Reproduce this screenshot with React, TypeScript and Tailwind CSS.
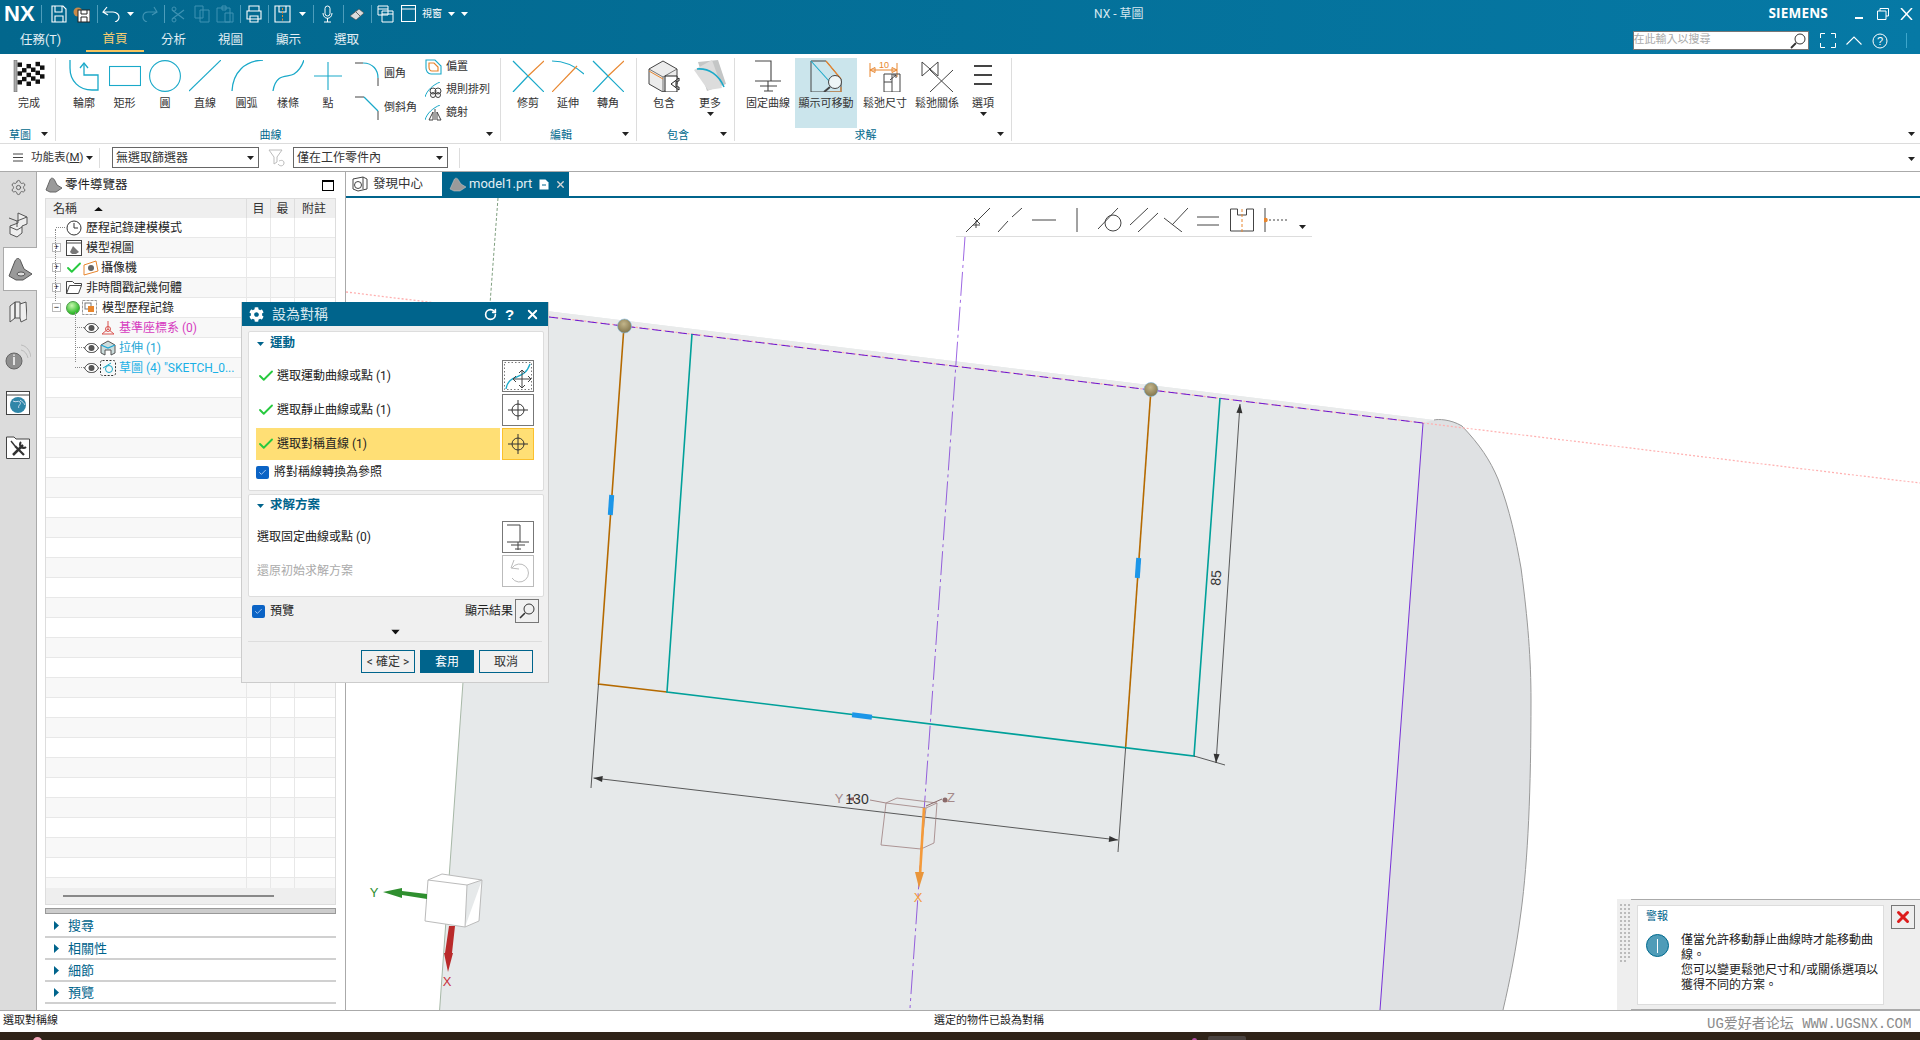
import type { ReactNode } from 'react';
import { Check, RotateCw, Settings, X } from 'lucide-react';
import { FaCog } from 'react-icons/fa';

const CY = '#1aa9c9';
const OR = '#e8862e';
const DK = '#444';

function Ico({ w, h, children, className }: { w: number; h: number; children: ReactNode; className?: string }) {
  return (
    <svg width={w} height={h} viewBox={`0 0 ${w} ${h}`} fill="none" className={`block shrink-0 ${className ?? ''}`}>
      {children}
    </svg>
  );
}

function Caret({ className, color = '#222' }: { className?: string; color?: string }) {
  return (
    <svg width="7" height="4" viewBox="0 0 7 4" className={`block shrink-0 ${className ?? ''}`}>
      <path d="M0 0h7L3.5 4z" fill={color} />
    </svg>
  );
}

function Sep({ ml }: { ml: string }) {
  return <div className={`w-px h-[18px] bg-[#4d9dbb] shrink-0 ${ml}`} />;
}

function Flag() {
  const cells = [];
  for (let r = 0; r < 5; r++) {
    for (let c = 0; c < 6; c++) {
      const wave = Math.sin(c * 0.9) * 1.5;
      if ((r + c) % 2 === 0) cells.push(<rect key={`${r}-${c}`} x={4.5 + c * 4.5} y={2.5 + r * 4.4 + wave} width="4.5" height="4.4" fill="#111" />);
    }
  }
  return (
    <Ico w={32} h={32}>
      <rect x="1" y="0" width="3" height="32" fill="#aaa" stroke="#555" strokeWidth="0.5" />
      {cells}
    </Ico>
  );
}

const curveIcons: { label: string; w: string; icon: ReactNode }[] = [
  {
    label: '輪廓', w: 'w-[40px]', icon: (
      <Ico w={30} h={32}>
        <path d="M1 0v8c0 13 9 22 22 22h6V15H15V4" stroke={CY} strokeWidth="1.3" />
        <path d="M11 8l4-5 4 5" stroke={CY} strokeWidth="1.3" />
      </Ico>
    ),
  },
  { label: '矩形', w: 'w-[41px]', icon: <Ico w={32} h={32}><rect x="0.5" y="6.5" width="31" height="19" stroke={CY} strokeWidth="1.1" /></Ico> },
  { label: '圓', w: 'w-[40px]', icon: <Ico w={32} h={32}><circle cx="16" cy="16" r="15.4" stroke={CY} strokeWidth="1.1" /></Ico> },
  { label: '直線', w: 'w-[40px]', icon: <Ico w={32} h={32}><path d="M0 31L32 0" stroke={CY} strokeWidth="1.2" /></Ico> },
  { label: '圓弧', w: 'w-[43px]', icon: <Ico w={32} h={32}><path d="M1 31C2 12 14 1 32 0" stroke={CY} strokeWidth="1.3" /></Ico> },
  { label: '樣條', w: 'w-[40px]', icon: <Ico w={32} h={32}><path d="M1 31C4 12 16 18 22 14S30 6 32 0" stroke={CY} strokeWidth="1.3" /></Ico> },
  { label: '點', w: 'w-[40px]', icon: <Ico w={28} h={32}><path d="M14 2v28M0 16h28" stroke={CY} strokeWidth="1.1" /></Ico> },
];

function Tool({ label, w, icon, caret, active }: { label: string; w: string; icon: ReactNode; caret?: boolean; active?: boolean }) {
  return (
    <div className={`${w} h-[70px] flex flex-col items-center shrink-0 ${active ? 'bg-[#cbe5ec]' : ''}`}>
      <div className="h-[32px] mt-[2px] flex items-start justify-center">{icon}</div>
      <div className="mt-[6px] text-[11px] leading-[12px] text-[#333] whitespace-nowrap">{label}</div>
      {caret && <Caret className="mt-[2px]" />}
    </div>
  );
}

function Group({ w, label, children }: { w: string; label: string; children: ReactNode }) {
  return (
    <div className={`${w} h-[83px] mt-[4px] flex flex-col border-r border-[#ddd] shrink-0`}>
      <div className="h-[72px] flex">{children}</div>
      <div className="relative h-[11px] flex justify-center pr-[15px] text-[11px] leading-[12px] text-[#00698d]">
        {label}
        <Caret className="absolute right-[7px] top-[2px]" />
      </div>
    </div>
  );
}

function SmallRow({ icon, label, h, lw }: { icon: ReactNode; label: string; h: string; lw?: string }) {
  return (
    <div className={`flex items-center gap-[4px] ${h}`}>
      {icon}
      <span className={`text-[11px] text-[#333] whitespace-nowrap ${lw ?? ''}`}>{label}</span>
    </div>
  );
}

function Ribbon() {
  return (
    <div className="h-[90px] flex bg-white border-b border-[#dcdcdc] relative shrink-0">
      <Group w="w-[56px]" label="草圖">
        <div className="pl-[9px]"><Tool label="完成" w="w-[40px]" icon={<Flag />} /></div>
      </Group>
      <Group w="w-[445px]" label="曲線">
        <div className="flex pl-[8px]">
          {curveIcons.map((t) => <Tool key={t.label} {...t} />)}
          <div className="ml-[7px] w-[70px] pt-[4px] flex flex-col gap-[10px]">
            <SmallRow h="h-[24px]" label="圓角" icon={
              <Ico w={25} h={24}><path d="M0 1h8M23 16v8" stroke={DK} strokeWidth="1" /><path d="M8 1c10 0 15 7 15 15" stroke={CY} strokeWidth="1.2" /></Ico>
            } />
            <SmallRow h="h-[24px]" label="倒斜角" icon={
              <Ico w={25} h={24}><path d="M0 1h9M23 15v9" stroke={DK} strokeWidth="1" /><path d="M9 1l14 14" stroke={CY} strokeWidth="1.2" /></Ico>
            } />
          </div>
          <div className="w-[72px] pt-[1px] flex flex-col gap-[7px]">
            <SmallRow h="h-[16px]" label="偏置" icon={
              <Ico w={17} h={16}><path d="M1 1h9l6 6v8H6C3 15 1 12 1 9z" stroke={CY} strokeWidth="1.1" /><path d="M4 4h5l4 4v4H7C5 12 4 10 4 8z" stroke={OR} strokeWidth="1.2" /></Ico>
            } />
            <SmallRow h="h-[16px]" label="規則排列" icon={
              <Ico w={17} h={16}><path d="M0 15C2 8 8 3 15 0" stroke={CY} /><circle cx="8" cy="9" r="3" stroke={DK} /><circle cx="13" cy="9" r="3" stroke={DK} /><circle cx="8" cy="13" r="2.5" stroke={DK} /><circle cx="13" cy="13" r="2.5" stroke={DK} /></Ico>
            } />
            <SmallRow h="h-[16px]" label="鏡射" icon={
              <Ico w={17} h={16}><path d="M0 15C2 8 8 3 15 0" stroke={CY} /><path d="M10 4v11M8 7l-4 8h4zM12 7l4 8h-4z" stroke={DK} /></Ico>
            } />
          </div>
        </div>
      </Group>
      <Group w="w-[136px]" label="編輯">
        <div className="flex pl-[7px]">
          <Tool label="修剪" w="w-[40px]" icon={<Ico w={32} h={32}><path d="M1 1l31 31" stroke={CY} strokeWidth="1.2" /><path d="M16 16L32 1" stroke={OR} strokeWidth="1.2" /><path d="M1 32l15-16" stroke={CY} strokeWidth="1.2" /></Ico>} />
          <Tool label="延伸" w="w-[40px]" icon={<Ico w={32} h={32}><path d="M0 1c12 0 23 5 32 13" stroke={CY} strokeWidth="1.2" /><path d="M0 32L25 6" stroke={OR} strokeWidth="1.2" /></Ico>} />
          <Tool label="轉角" w="w-[40px]" icon={<Ico w={32} h={32}><path d="M1 32L16 16L32 32" stroke={CY} strokeWidth="1.2" /><path d="M1 1l15 15" stroke={CY} strokeWidth="1.2" /><path d="M16 16L32 1" stroke={OR} strokeWidth="1.2" /></Ico>} />
        </div>
      </Group>
      <Group w="w-[98px]" label="包含">
        <div className="flex pl-[7px] gap-[6px]">
          <Tool label="包含" w="w-[40px]" icon={
            <Ico w={32} h={32}>
              <path d="M15 1l14 8v15l-14 8-14-8V9z" fill="#ececec" stroke={DK} />
              <path d="M1 9l14 8 14-8M15 17v15" stroke={DK} strokeWidth="0.7" />
              <path d="M1 11l14 8" stroke={OR} />
              <path d="M17 16h12v16H17z" fill="#fff" stroke="#222" />
              <path d="M31 18l-8 6 8 6v-3h-3v-6h3z" fill="#fff" stroke="#222" />
            </Ico>
          } />
          <Tool label="更多" w="w-[40px]" caret icon={
            <Ico w={32} h={32}>
              <path d="M4 2l20-2 8 24-19 7z" fill="#c4c6c6" />
              <path d="M0 10L18 0l10 28-14 2z" fill="#dcdcdc" />
              <path d="M3 9c12-1 22 6 27 18" stroke={CY} strokeWidth="1.6" />
            </Ico>
          } />
        </div>
      </Group>
      <Group w="w-[277px]" label="求解">
        <div className="flex pl-[9px]">
          <Tool label="固定曲線" w="w-[48px]" icon={<Ico w={26} h={32}><path d="M0 1h16v20M0 21h26M5 26h17M9 31h9M13 21v10" stroke={DK} strokeWidth="1.1" /></Ico>} />
          <div className="w-[3px]" />
          <Tool label="顯示可移動" w="w-[62px]" active icon={
            <Ico w={32} h={32}>
              <path d="M1 1h15l15 18v13H1z" stroke={DK} strokeWidth="1" />
              <path d="M16 1l15 18" stroke={OR} strokeWidth="1.2" />
              <path d="M1 1l18 20" stroke={CY} strokeWidth="1.1" />
              <path d="M20 32h11v-5" stroke={OR} />
              <circle cx="25" cy="22" r="6.5" fill="#eef6f7" stroke={DK} />
              <path d="M20 27l-6 5" stroke={DK} strokeWidth="2" />
            </Ico>
          } />
          <Tool label="鬆弛尺寸" w="w-[56px]" icon={
            <Ico w={32} h={32}>
              <path d="M1 3v14M28 3v14M1 10h27M1 10l5-2.5v5zM28 10l-5-2.5v5z" stroke={OR} />
              <text x="10" y="8" fontSize="9" fill={OR} fontFamily="Liberation Sans">10</text>
              <path d="M15 14h16v18H15zM15 22h8M23 14v18M21 20l6-5M24 15h3v3" stroke={DK} />
            </Ico>
          } />
          <Tool label="鬆弛關係" w="w-[48px]" icon={<Ico w={32} h={32}><path d="M1 2l16 14M1 16l16-14M1 2v14M17 2v14M9 32l23-22M9 10l23 22" stroke={DK} strokeWidth="1" /></Ico>} />
          <Tool label="選項" w="w-[44px]" caret icon={<Ico w={18} h={32}><path d="M0 6h18M0 15h18M0 24h18" stroke={DK} strokeWidth="2.2" /></Ico>} />
        </div>
      </Group>
      <Caret className="absolute right-[5px] top-[78px]" />
    </div>
  );
}

function TitleBar() {
  return (
    <div className="h-[54px] bg-gradient-to-r from-[#02678d] to-[#0679a5] text-white shrink-0">
      <div className="h-[27px] flex items-center pl-[4px] pr-[7px]">
        <div className="w-[32px] text-[22px] font-bold leading-none font-['Liberation_Sans',sans-serif]">NX</div>
        <Sep ml="ml-[5px]" />
        <Ico w={16} h={18} className="ml-[9px]"><path d="M1 1h11l3 3v13H1zM4 1v6h7V1M4 17v-6h8v6" stroke="#fff" strokeWidth="1.1" /></Ico>
        <Ico w={17} h={18} className="ml-[6px]"><circle cx="5" cy="7" r="4.5" fill="#c98a4a" /><rect x="5" y="5" width="12" height="12" fill="#fff" stroke="#222" /><path d="M8 5v4h6V5M8 17v-5h6v5" stroke="#222" /></Ico>
        <Sep ml="ml-[7px]" />
        <Ico w={18} h={16} className="ml-[4px]"><path d="M5 1L1 6l5 3M1 6h10c4 0 6 3 6 5s-1 4-4 5" stroke="#fff" strokeWidth="1.2" /></Ico>
        <Caret className="ml-[7px]" color="#fff" />
        <Ico w={16} h={16} className="ml-[8px]"><path d="M12 1l3 5-5 3M15 6H6c-4 0-5 3-5 5s1 4 4 5" stroke="#3f93b3" strokeWidth="1.2" /></Ico>
        <Sep ml="ml-[6px]" />
        <Ico w={16} h={18} className="ml-[6px]"><path d="M1 14l12-9M1 5l12 9" stroke="#3f93b3" strokeWidth="1.2" /><circle cx="3" cy="15" r="2" stroke="#3f93b3" /><circle cx="3" cy="4" r="2" stroke="#3f93b3" /></Ico>
        <Ico w={16} h={18} className="ml-[7px]"><path d="M1 1h8v12H1zM6 5h9v12H6z" stroke="#3f93b3" /></Ico>
        <Ico w={18} h={18} className="ml-[6px]"><path d="M1 3h13v14H1zM6 1h4v4H6zM9 8h8v9H9z" stroke="#3f93b3" /></Ico>
        <Sep ml="ml-[6px]" />
        <Ico w={16} h={18} className="ml-[5px]"><path d="M3 6V1h10v5M1 6h14v8H1zM4 11h8v6H4z" stroke="#fff" strokeWidth="1.1" /></Ico>
        <Sep ml="ml-[6px]" />
        <Ico w={17} h={18} className="ml-[5px]"><path d="M1 1h15v16H1zM5 1v6h7V1" stroke="#fff" strokeWidth="1.1" /><path d="M8.5 3v14" stroke={OR} strokeDasharray="2 1.5" /></Ico>
        <Caret className="ml-[8px]" color="#fff" />
        <Sep ml="ml-[7px]" />
        <Ico w={11} h={18} className="ml-[8px]"><rect x="3" y="1" width="5" height="10" rx="2.5" stroke="#fff" /><path d="M1 8c0 7 9 7 9 0M5.5 13v4M2 17h7" stroke="#fff" /></Ico>
        <Sep ml="ml-[10px]" />
        <Ico w={16} h={14} className="ml-[5px]"><path d="M1 9l9-7 5 4-8 7z" fill="#dcdcdc" stroke="#444" strokeWidth="0.6" /><path d="M6 4l5 5" stroke="#666" /></Ico>
        <Sep ml="ml-[6px]" />
        <Ico w={17} h={18} className="ml-[5px]"><path d="M1 1h10v9H1zM5 6h11v11H5zM5 9h11M1 4h10" stroke="#fff" /></Ico>
        <Ico w={15} h={17} className="ml-[7px]"><path d="M.5.5h14v16H.5zM.5 4h14" stroke="#fff" strokeWidth="1.1" /></Ico>
        <span className="ml-[6px] w-[20px] text-[10px] whitespace-nowrap">視窗</span>
        <Caret className="ml-[6px]" color="#fff" />
        <Caret className="ml-[6px]" color="#fff" />
        <div className="ml-[626px] w-[52px] text-[12px] text-[#d5e8ef] whitespace-nowrap">NX - 草圖</div>
        <div className="ml-auto text-[13.5px] font-bold tracking-[0.2px] font-['Open_Sans',sans-serif]">SIEMENS</div>
        <div className="ml-[27px] w-[8px] h-[2px] bg-white mt-[8px]" />
        <Ico w={12} h={12} className="ml-[14px]"><path d="M3 3V.5h8.5V8H9M.5 3H9v8.5H.5z" stroke="#fff" /></Ico>
        <Ico w={13} h={12} className="ml-[11px]"><path d="M1 0l11 12M12 0L1 12" stroke="#fff" strokeWidth="1.5" /></Ico>
      </div>
      <div className="h-[27px] flex items-center pl-[20px] pr-[13px] text-[12.5px]">
        <span className="w-[40px] whitespace-nowrap text-[#e3eff4]">任務(T)</span>
        <div className="ml-[26px] w-[58px] h-[25px] self-start pt-[3px] text-center border-b-2 border-[#f4c35e] text-[#f6cd72]">首頁</div>
        <span className="ml-[17px] text-[#e3eff4]">分析</span>
        <span className="ml-[32px] text-[#e3eff4]">視圖</span>
        <span className="ml-[33px] text-[#e3eff4]">顯示</span>
        <span className="ml-[33px] text-[#e3eff4]">選取</span>
        <div className="ml-auto w-[176px] h-[19px] bg-white border border-[#777] flex items-center justify-between pr-[2px]">
          <span className="text-[11px] text-[#aaa] whitespace-nowrap">在此輸入以搜尋</span>
          <Ico w={16} h={16}><circle cx="10" cy="6" r="5" stroke="#333" /><path d="M6 10l-5 5" stroke="#333" strokeWidth="1.8" /></Ico>
        </div>
        <Ico w={16} h={15} className="ml-[11px]"><path d="M5 .5H.5V5M11 .5h4.5V5M5 14.5H.5V10M11 14.5h4.5V10" stroke="#fff" /></Ico>
        <Ico w={16} h={9} className="ml-[10px]"><path d="M.5 8.5L8 1l7.5 7.5" stroke="#fff" strokeWidth="1.1" /></Ico>
        <Ico w={16} h={16} className="ml-[10px]"><circle cx="8" cy="8" r="7" stroke="#fff" /><text x="5" y="12" fontSize="11" fill="#fff" fontFamily="Liberation Sans">?</text></Ico>
        <div className="ml-[18px] w-[1.5px] h-[15px] bg-[#3ea6cc]" />
      </div>
    </div>
  );
}

function SelectBar() {
  return (
    <div className="h-[28px] flex items-center bg-white border-b border-[#aaa] relative shrink-0 text-[12px] text-[#333]">
      <Ico w={10} h={9} className="ml-[13px]"><path d="M0 1h10M0 4.5h10M0 8h10" stroke="#444" /></Ico>
      <span className="ml-[8px] w-[50px] whitespace-nowrap text-[11.5px]">功能表(<span className="underline">M</span>)</span>
      <Caret className="ml-[5px]" />
      <div className="ml-[6px] w-px h-[20px] bg-[#ddd]" />
      <div className="ml-[12px] w-[147px] h-[21px] border border-[#666] flex items-center justify-between pl-[3px] pr-[4px]">
        <span>無選取篩選器</span><Caret />
      </div>
      <Ico w={18} h={18} className="ml-[9px]"><path d="M1 1h13L9 8v5l-3 2V8z" stroke="#bbb" /><path d="M10 15c2 3 6 2 6-1s-3-3-5-2" stroke="#bbb" /></Ico>
      <div className="ml-[7px] w-[155px] h-[21px] border border-[#666] flex items-center justify-between pl-[3px] pr-[4px]">
        <span>僅在工作零件內</span><Caret />
      </div>
      <div className="ml-[11px] w-px h-[20px] bg-[#ddd]" />
      <Caret className="absolute right-[5px] top-[13px]" />
    </div>
  );
}

function SideStrip() {
  const base = 'w-full flex items-center justify-center';
  return (
    <div className="w-[37px] bg-[#dcdcdc] border-r border-[#aaa] flex flex-col shrink-0 items-end">
      <div className={`${base} h-[30px]`}><Settings size={17} color="#555" strokeWidth={1.2} /></div>
      <div className={`${base} h-[45px]`}>
        <Ico w={20} h={26}><path d="M10 1l9 4v7l-5 2v7l-5 4-7-3v-8l8-3z" fill="#eee" stroke="#555" /><path d="M1 6l8 3 10-4M9 9v6M2 15l7 3 5-3" stroke="#555" /></Ico>
      </div>
      <div className="w-[34px] h-[44px] -mr-px bg-white border-y border-l border-[#aaa] flex items-center justify-center">
        <Ico w={25} h={24}>
          <path d="M1 19L7 4c2-4 5-3 6 1l3 7 8 5-9 6H8z" fill="#9a9a9a" stroke="#555" />
          <ellipse cx="13" cy="17" rx="4" ry="2" fill="#ddd" stroke="#555" />
        </Ico>
      </div>
      <div className={`${base} h-[42px]`}><Ico w={18} h={22}><path d="M1 5l5-4v16l-5 4zM6 1h5v16H6zM11 3l6-2 1 17-6 3-1-4" stroke="#555" fill="#eee" /></Ico></div>
      <div className={`${base} h-[48px]`}>
        <Ico w={26} h={26}><circle cx="9" cy="17" r="8" fill="#8f8f8f" stroke="#666" /><path d="M9 13v8M9 10.5v1.2" stroke="#fff" strokeWidth="1.5" /><path d="M16 6c4 1 6 4 7 8M16 1c6 1 9 6 10 12" stroke="#bbb" /></Ico>
      </div>
      <div className={`${base} h-[43px]`}>
        <Ico w={24} h={24}><rect x=".5" y=".5" width="23" height="23" fill="#fff" stroke="#444" /><path d="M1 4h22" stroke="#444" /><circle cx="12" cy="14" r="8" fill="#2f86a8" /><path d="M7 10c3 2 5-1 7 1s-3 4-1 6M14 9c3 2 4 3 5 5" stroke="#cde" /></Ico>
      </div>
      <div className={`${base} h-[44px]`}>
        <Ico w={24} h={25}>
          <path d="M.5 24.5V3H8l2 2h13.5v19.5z" fill="#fff" stroke="#444" />
          <path d="M7 21L17 11" stroke="#333" strokeWidth="2.5" />
          <path d="M15 8a3.5 3.5 0 1 0 5 5" stroke="#333" strokeWidth="2" />
          <path d="M18 21L9 12" stroke="#333" strokeWidth="2.2" />
          <path d="M5 7l4 5" stroke="#333" strokeWidth="1.4" />
        </Ico>
      </div>
    </div>
  );
}

type Row = { indent?: boolean; toggle?: string; check?: boolean; icon?: ReactNode; text: string; color?: string; x: string };

const rows: Row[] = [
  { text: '歷程記錄建模模式', x: 'ml-[4px]', icon: <Ico w={16} h={16}><circle cx="8" cy="8" r="7" stroke="#333" /><path d="M8 3v5h4" stroke="#333" /></Ico> },
  { toggle: '+', text: '模型視圖', x: 'ml-[4px]', icon: <Ico w={16} h={16}><rect x=".5" y=".5" width="15" height="15" fill="#fff" stroke="#444" /><path d="M1 3h14" stroke="#444" /><path d="M4 12l3-6 3 3 3 3-3 2H6z" fill="#777" /></Ico> },
  { toggle: '+', check: true, text: '攝像機', x: 'ml-[2px]', icon: <Ico w={16} h={16}><path d="M1 5l12-4 2 10-14 4z" stroke={OR} /><circle cx="8" cy="8" r="3" fill="#666" /></Ico> },
  { toggle: '+', text: '非時間戳記幾何體', x: 'ml-[4px]', icon: <Ico w={16} h={13}><path d="M.5 12.5V.5h6l2 2h7v2M.5 12.5l3-8h12l-3 8z" stroke="#444" fill="#fff" /></Ico> },
  { toggle: '−', text: '模型歷程記錄', x: 'ml-[5px]', icon: (
    <span className="flex items-center gap-[2px]">
      <span className="w-[14px] h-[14px] rounded-full bg-[radial-gradient(circle_at_40%_30%,#c8f7b0,#2fbb2a_70%)] border border-[#4a9c46]" />
      <Ico w={15} h={15}><rect x=".5" y=".5" width="14" height="14" stroke="#999" strokeDasharray="3 1" /><rect x="3" y="3" width="6" height="6" stroke="#777" /><rect x="6" y="6" width="6" height="6" fill={OR} /></Ico>
    </span>
  ) },
  { indent: true, text: '基準座標系 (0)', color: 'text-[#d63cc0]', x: 'ml-[3px]', icon: <Ico w={16} h={16}><path d="M8 1v8M8 9L2 14M8 9l6 5M2 14h12" stroke="#d9534f" /><circle cx="8" cy="9" r="2.5" stroke="#d9534f" /></Ico> },
  { indent: true, text: '拉伸 (1)', color: 'text-[#1ea7d6]', x: 'ml-[3px]', icon: <Ico w={16} h={16}><path d="M8 1l7 4v8l-4 2v-5H5v5l-4-2V5z" fill="#cdd" stroke="#555" /><path d="M1 5l7 3 7-3" stroke="#1ea7d6" strokeWidth="1.3" /></Ico> },
  { indent: true, text: '草圖 (4) "SKETCH_0...', color: 'text-[#19b0e6]', x: 'ml-[3px]', icon: <Ico w={16} h={16}><rect x=".5" y=".5" width="15" height="15" rx="2" stroke="#333" strokeDasharray="2 1.5" /><circle cx="9" cy="9" r="3.5" stroke={CY} /><path d="M3 8l8-5" stroke={CY} /></Ico> },
];

function Eye() {
  return <Ico w={15} h={10}><path d="M.5 5C3 1 5 .5 7.5.5S12 1 14.5 5C12 9 10 9.5 7.5 9.5S3 9 .5 5z" stroke="#333" fill="#fff" /><circle cx="7.5" cy="5" r="3" fill="#555" /></Ico>;
}

function Toggle({ sign }: { sign: string }) {
  return <div className="w-[9px] h-[9px] border border-[#bbb] bg-white flex items-center justify-center text-[9px] leading-[7px] text-black font-['Liberation_Sans']">{sign}</div>;
}

function TreeRow({ row, i }: { row?: Row; i: number }) {
  return (
    <div className={`h-[20px] grid grid-cols-[200px_24px_24px_1fr] border-b border-[#e8e8e8] ${i % 2 ? 'bg-[#f8f8f8]' : 'bg-white'}`}>
      <div className="flex items-center text-[12px] whitespace-nowrap overflow-hidden text-[#222]">
        {row && (row.indent ? (
          <div className="ml-[29px] flex items-center">
            <div className="w-[9px] border-t border-dotted border-[#888]" />
            <Eye />
            <div className="ml-[1px]">{row.icon}</div>
          </div>
        ) : (
          <div className="ml-[6px] flex items-center">
            <div className="w-[9px] mr-[5px]">{row.toggle ? <Toggle sign={row.toggle} /> : <div className="ml-[4px] w-[9px] border-t border-dotted border-[#888]" />}</div>
            {row.check && <Check size={18} color="#27c93f" strokeWidth={2.5} className="-ml-[1px]" />}
            {row.icon}
          </div>
        ))}
        {row && <span className={`${row.x} ${row.color ?? ''}`}>{row.text}</span>}
      </div>
      <div className="border-l border-[#e8e8e8]" />
      <div className="border-l border-[#e8e8e8]" />
      <div className="border-l border-[#e8e8e8]" />
    </div>
  );
}

function Navigator() {
  return (
    <div className="w-[309px] bg-white border-r border-[#aaa] flex flex-col shrink-0 pl-[8px] pr-[9px]">
      <div className="h-[26px] flex items-center">
        <Ico w={17} h={16}><path d="M1 13L5 3c1-3 4-2 5 1l2 4 5 3-6 4H5z" fill="#9a9a9a" stroke="#666" /></Ico>
        <span className="ml-[3px] text-[12.5px] text-[#222]">零件導覽器</span>
        <div className="ml-auto mr-[2px] w-[12px] h-[11px] border border-black border-t-2" />
      </div>
      <div className="w-[291px] h-[707px] border border-[#ddd] flex flex-col overflow-hidden">
        <div className="h-[19px] grid grid-cols-[200px_24px_24px_1fr] bg-[#efefef] text-[12px] text-[#333] shrink-0">
          <div className="flex items-center pl-[7px]">名稱<Caret className="ml-[18px] scale-x-125 rotate-180" color="#111" /></div>
          <div className="border-l border-[#ddd] flex items-center justify-center">目</div>
          <div className="border-l border-[#ddd] flex items-center justify-center">最</div>
          <div className="border-l border-[#ddd] pl-[7px] flex items-center">附註</div>
        </div>
        <div className="flex-1 overflow-hidden relative">
          {Array.from({ length: 34 }, (_, i) => <TreeRow key={i} row={rows[i]} i={i} />)}
          <div className="absolute left-[9px] top-[11px] h-[72px] border-l border-dotted border-[#888]" />
          <div className="absolute left-[29px] top-[94px] h-[50px] border-l border-dotted border-[#888]" />
        </div>
        <div className="h-[16px] bg-[#eee] shrink-0 pt-[7px] pl-[17px]"><div className="w-[211px] h-[2px] bg-[#888]" /></div>
      </div>
      <div className="mt-[3px] h-[6px] w-[291px] bg-[#ccc] border border-[#999]" />
      {['搜尋', '相關性', '細節', '預覽'].map((t, i) => (
        <div key={t} className={`w-[291px] border-b-2 border-[#d0d0d0] flex items-center pl-[9px] pt-[1px] text-[13px] text-[#00648c] ${i === 0 ? 'h-[24px]' : 'h-[22px]'}`}>
          <svg width="5" height="9" viewBox="0 0 5 9" className="block"><path d="M0 0l5 4.5L0 9z" fill="#00648c" /></svg>
          <span className="ml-[9px]">{t}</span>
        </div>
      ))}
    </div>
  );
}

function Arrow({ x, y, angle, color = '#333', len = 9, wid = 3 }: { x: number; y: number; angle: number; color?: string; len?: number; wid?: number }) {
  return <path d={`M0 0L${-len} ${-wid}V${wid}Z`} fill={color} transform={`translate(${x} ${y}) rotate(${angle})`} />;
}

function Canvas() {
  const purple = '#5a00d0';
  return (
    <svg viewBox="346 198 1574 812" className="absolute inset-0 w-full h-full">
      <path d="M490 304L1434 420L1423 423L1380 1010H439.6Z" fill="#e6e9ea" />
      <path d="M490 304L1434 420L1423 423L549 317Z" fill="#e9ebeb" />
      <path d="M1423 423C1430 420 1438 419 1445 420C1453 421 1458 423 1462 426C1480 445 1490 460 1498 479C1510 510 1516 540 1521 568C1528 620 1531 660 1531 700C1531 790 1528 860 1521 912C1516 950 1510 980 1503 1010H1380Z" fill="#dfe1e3" />
      <path d="M1434 420C1438 419 1450 419 1462 426C1480 445 1490 460 1498 479C1510 510 1516 540 1521 568C1528 620 1531 660 1531 700C1531 790 1528 860 1521 912C1516 950 1510 980 1503 1010" fill="none" stroke="#999" strokeWidth="1" />
      <path d="M498 198L490 304" stroke="#7f9f7f" strokeWidth="1" strokeDasharray="3 2" fill="none" />
      <path d="M490 304L439.6 1010" stroke="#a7b8a7" strokeWidth="1" fill="none" />
      <path d="M346 292L1423 423" stroke="#ffb0b0" strokeWidth="1.3" strokeDasharray="2 2" fill="none" />
      <path d="M1423 423L1920 483" stroke="#ffb0b0" strokeWidth="1.2" strokeDasharray="2 2" fill="none" />
      <path d="M549 317L1423 423" stroke={purple} strokeWidth="0.9" strokeDasharray="9 4" fill="none" />
      <path d="M1423 423L1380 1010" stroke={purple} strokeWidth="0.8" fill="none" />
      <path d="M965 237L910 1008" stroke={purple} strokeWidth="0.6" strokeDasharray="24 4 3 4" fill="none" />

      <path d="M624 326L598.5 684L667 692" stroke="#b56a00" strokeWidth="1.6" fill="none" />
      <path d="M1151 389L1125.6 748" stroke="#b56a00" strokeWidth="1.6" fill="none" />
      <path d="M692 334L667 692L1194 756L1220 398" stroke="#00a09a" strokeWidth="1.6" fill="none" />
      <rect x="608.5" y="495" width="5" height="20" fill="#1c96e8" transform="rotate(4 611 505)" />
      <rect x="1135.5" y="558" width="5" height="20" fill="#1c96e8" transform="rotate(4 1138 568)" />
      <rect x="852" y="713.5" width="20" height="5" fill="#1c96e8" transform="rotate(7 862 716)" />

      <path d="M598.5 684L591 788M1125.6 748L1118 852M593.5 778L1118 840" stroke="#333" strokeWidth="0.8" fill="none" />
      <Arrow x={593.5} y={778} angle={187} />
      <Arrow x={1118} y={840} angle={7} />
      <path d="M1240 404L1216 763M1194 756L1225 765" stroke="#333" strokeWidth="0.8" fill="none" />
      <Arrow x={1240} y={404} angle={-86} />
      <Arrow x={1216} y={763} angle={94} />
      <text x="1217" y="578" transform="rotate(-86 1217 578)" textAnchor="middle" fontSize="14" fill="#333" fontFamily="Liberation Sans" dominantBaseline="middle">85</text>

      <path d="M886 803L897 798L937 803L926 808ZM886 803L881 845L921 849L926 808M921 849L934 843L937 803" stroke="#a58a8a" strokeWidth="0.9" fill="none" />
      <path d="M870 800L886 803" stroke="#a58a8a" strokeWidth="1" />
      <path d="M926 806L942 799" stroke="#8a6a6a" strokeWidth="1" />
      <circle cx="945" cy="800" r="2.5" fill="#8a6a6a" />
      <path d="M846 799l8-2v4z" fill="#8a5a5a" />
      <text x="839" y="803" textAnchor="middle" fontSize="13" fill="#a58a8a" fontFamily="Liberation Sans">Y</text>
      <text x="951" y="802" textAnchor="middle" fontSize="13" fill="#a58a8a" fontFamily="Liberation Sans">Z</text>
      <text x="857" y="804" textAnchor="middle" fontSize="14" fill="#333" fontFamily="Liberation Sans">130</text>
      <path d="M924 808L920 875" stroke="#f49a3a" strokeWidth="2.6" />
      <path d="M919 888L915 872H924Z" fill="#e9953a" />
      <text x="918" y="902" textAnchor="middle" fontSize="13" fill="#f49a3a" fontFamily="Liberation Sans">X</text>

      <path d="M428 880L442 874L482 880L467 885ZM428 880L425 921L465 927L467 885M465 927L479 921L482 880" fill="#fff" stroke="#bbb" />
      <path d="M427 894L402 891V888L383 892L402 898V895L427 899Z" fill="#2f8f2f" />
      <path d="M449 926L445 953H444L448 972L453 953H452L455 926Z" fill="#b92a2a" />
      <text x="374" y="897" textAnchor="middle" fontSize="13" fill="#2f8f2f" fontFamily="Liberation Sans">Y</text>
      <text x="447" y="986" textAnchor="middle" fontSize="13" fill="#c9303a" fontFamily="Liberation Sans">X</text>

      <defs>
        <radialGradient id="ball" cx="45%" cy="35%" r="70%">
          <stop offset="0" stopColor="#c2b58a" />
          <stop offset="1" stopColor="#7d7048" />
        </radialGradient>
      </defs>
      <ellipse cx="624.5" cy="326" rx="7" ry="7" fill="url(#ball)" stroke="#7fbce6" strokeWidth="0.6" />
      <ellipse cx="1151" cy="389.5" rx="7" ry="7" fill="url(#ball)" stroke="#7fbce6" strokeWidth="0.6" />
    </svg>
  );
}

function FloatBar() {
  const c = '#444';
  return (
    <div className="absolute left-[610px] top-[9px] w-[356px] h-[30px] border-b border-[#ddd] bg-white pl-[10px] flex items-start pt-[1px]">
      <Ico w={24} h={24}><path d="M0 24L24 0M8 10l6 6M7 17h7M10 13v7" stroke={c} /></Ico>
      <Ico w={24} h={24} className="ml-[8px]"><path d="M0 24L10 13M14 9L24 0" stroke={c} /></Ico>
      <Ico w={24} h={24} className="ml-[10px]"><path d="M0 12h24" stroke={c} /></Ico>
      <Ico w={2} h={24} className="ml-[20px]"><path d="M1 0v24" stroke={c} /></Ico>
      <Ico w={24} h={24} className="ml-[20px]"><path d="M0 21L20 0" stroke={c} /><circle cx="15" cy="15" r="8" stroke={c} /></Ico>
      <Ico w={28} h={24} className="ml-[8px]"><path d="M0 17L18 0M8 24L28 5" stroke={c} /></Ico>
      <Ico w={24} h={24} className="ml-[6px]"><path d="M0 10l18 14M8 17L24 0" stroke={c} /></Ico>
      <Ico w={22} h={24} className="ml-[9px]"><path d="M0 9h22M0 17h22" stroke={c} /></Ico>
      <Ico w={24} h={24} className="ml-[11px]"><path d="M.5 1h7v6h9V1h7v22H.5z" stroke={c} /><path d="M12 1v23" stroke={OR} strokeDasharray="3 2" /></Ico>
      <Ico w={24} h={24} className="ml-[10px]"><path d="M1 0v24" stroke={c} /><path d="M5 12h19" stroke={c} strokeDasharray="2 2" /><circle cx="1.5" cy="12" r="2.3" fill={OR} /></Ico>
      <Caret className="ml-[11px] mt-[17px]" />
    </div>
  );
}

function Cross() {
  return <Ico w={20} h={20}><circle cx="10" cy="10" r="6" stroke="#333" /><path d="M10 0v20M0 10h20" stroke="#333" /></Ico>;
}

function PickRow({ label, icon, check, hot, dim }: { label: string; icon: ReactNode; check?: boolean; hot?: boolean; dim?: boolean }) {
  return (
    <div className="flex h-[32px] mb-[2px]">
      <div className={`w-[244px] flex items-center pl-[1px] text-[12px] ${hot ? 'bg-[#ffdf75]' : ''} ${dim ? 'text-[#aaa]' : 'text-[#222]'}`}>
        {check && <Check size={18} color="#27c93f" strokeWidth={2.5} className="mr-[2px]" />}
        <span>{label}</span>
      </div>
      <div className={`ml-[2px] w-[32px] h-[32px] border flex items-center justify-center ${hot ? 'bg-[#ffdf75] border-[#fbc02d]' : dim ? 'border-[#bbb]' : 'border-[#777]'}`}>{icon}</div>
    </div>
  );
}

function SectionHead({ title }: { title: string }) {
  return (
    <div className="h-[23px] flex items-center pl-[8px]">
      <svg width="7" height="4" viewBox="0 0 7 4" className="block"><path d="M0 0h7L3.5 4z" fill="#00648c" /></svg>
      <span className="ml-[6px] text-[12.5px] font-bold text-[#00648c]">{title}</span>
    </div>
  );
}

function Box() {
  return <div className="w-[13px] h-[13px] rounded-[2px] bg-[#0b63c5] flex items-center justify-center"><Check size={9} color="#cfe3ff" strokeWidth={2} /></div>;
}

function Dialog() {
  return (
    <div className="absolute left-[241px] top-[302px] w-[308px] h-[381px] bg-[#f0f0f0] border-x border-b border-[#ccc] flex flex-col">
      <div className="h-[24px] bg-[#00648c] flex items-center text-white shrink-0">
        <FaCog size={15} className="ml-[7px]" />
        <span className="ml-[8px] text-[14px] text-[#d8e8ef]">設為對稱</span>
        <RotateCw size={13} strokeWidth={3} className="ml-auto" />
        <span className="ml-[8px] w-[10px] text-[15px] font-bold font-['Liberation_Sans'] leading-none">?</span>
        <X size={15} strokeWidth={3} className="ml-[10px] mr-[8px]" />
      </div>
      <div className="mx-[6px] mt-[5px] w-[296px] h-[160px] bg-white border border-[#ddd] rounded-[2px] pl-[7px] shrink-0">
        <div className="-ml-[7px]"><SectionHead title="運動" /></div>
        <div className="h-[5px]" />
        <PickRow check label="選取運動曲線或點 (1)" icon={
          <Ico w={28} h={28}><rect x=".5" y=".5" width="27" height="27" stroke="#777" strokeDasharray="1.5 2" /><path d="M2 27C5 10 20 20 26 2" stroke={CY} strokeWidth="1.3" /><path d="M18 8v18M9 17h18M15 11l3-3 3 3M15 23l3 3 3-3M12 14l-3 3 3 3M24 14l3 3-3 3" stroke="#444" /></Ico>
        } />
        <PickRow check label="選取靜止曲線或點 (1)" icon={<Cross />} />
        <PickRow check hot label="選取對稱直線 (1)" icon={<Cross />} />
        <div className="flex items-center mt-[3px]">
          <Box />
          <span className="ml-[5px] text-[12px] text-[#222]">將對稱線轉換為參照</span>
        </div>
      </div>
      <div className="mx-[6px] mt-[3px] w-[296px] h-[103px] bg-white border border-[#ddd] rounded-[2px] pl-[7px] shrink-0">
        <div className="-ml-[7px] -mt-[1px]"><SectionHead title="求解方案" /></div>
        <div className="h-[4px]" />
        <PickRow label="選取固定曲線或點 (0)" icon={<Ico w={22} h={26}><path d="M0 1h13v17M0 18h22M4 21h14M8 25h6M11 18v8" stroke="#444" /></Ico>} />
        <PickRow dim label="還原初始求解方案" icon={<Ico w={22} h={24}><path d="M5 9a9 9 0 1 1 0 10M7 1L4 9l8 1" stroke="#bbb" /></Ico>} />
      </div>
      <div className="h-[24px] mt-[2px] flex items-center pl-[10px] pr-[9px] shrink-0">
        <Box />
        <span className="ml-[5px] text-[12px] text-[#222]">預覽</span>
        <span className="ml-auto text-[12px] text-[#222]">顯示結果</span>
        <div className="ml-[2px] w-[24px] h-[24px] border border-[#777] flex items-center justify-center">
          <Ico w={16} h={16}><circle cx="10" cy="6" r="5" stroke="#333" /><path d="M6 10l-5 5" stroke="#333" strokeWidth="1.6" /></Ico>
        </div>
      </div>
      <div className="h-[18px] flex items-center justify-center shrink-0"><Caret className="scale-125" color="#111" /></div>
      <div className="mx-[6px] border-t border-[#ddd] pt-[8px] flex justify-end gap-[5px] pr-[9px] text-[12px]">
        <div className="w-[54px] h-[23px] border border-[#00648c] flex items-center justify-center text-[#333] whitespace-nowrap">&lt; 確定 &gt;</div>
        <div className="w-[54px] h-[23px] bg-[#00648c] flex items-center justify-center text-white">套用</div>
        <div className="w-[54px] h-[23px] border border-[#00648c] flex items-center justify-center text-[#333]">取消</div>
      </div>
    </div>
  );
}

function Alert() {
  return (
    <div className="absolute right-0 bottom-[30px] w-[303px] h-[111px] flex bg-[#eee]">
      <div className="w-[14px] pt-[5px] pl-[3px] flex flex-wrap content-start gap-[2px]">
        {Array.from({ length: 44 }, (_, i) => <div key={i} className="w-[2px] h-[2px] bg-[#bbb]" />)}
      </div>
      <div className="flex-1 flex border-t border-b border-[#aaa] pt-[5px] pl-[6px]">
        <div className="w-[247px] h-[100px] bg-white border border-[#ddd] pl-[8px] pt-[3px]">
          <div className="text-[11px] leading-[16px] text-[#00648c]">警報</div>
          <div className="flex mt-[8px]">
            <div className="w-[23px] h-[23px] rounded-full bg-[#4f9cb8] border border-[#006a8e] flex items-center justify-center shrink-0 mt-[1px]">
              <div className="w-px h-[14px] bg-white" />
            </div>
            <div className="ml-[12px] w-[200px] text-[12px] leading-[15px] text-[#222]">
              僅當允許移動靜止曲線時才能移動曲線。<br />您可以變更鬆弛尺寸和/或關係選項以獲得不同的方案。
            </div>
          </div>
        </div>
        <div className="ml-[7px] w-[24px] h-[24px] border border-[#777] flex items-center justify-center">
          <X size={18} color="#dd1c1c" strokeWidth={4} />
        </div>
      </div>
    </div>
  );
}

export default function App() {
  return (
    <div className="relative w-screen h-screen overflow-hidden flex flex-col bg-white font-['Roboto','Noto_Sans_CJK_TC','Noto_Sans_CJK_SC',sans-serif]">
      <TitleBar />
      <Ribbon />
      <SelectBar />
      <div className="flex-1 flex min-h-0">
        <SideStrip />
        <Navigator />
        <div className="flex-1 flex flex-col min-w-0">
          <div className="h-[26px] border-b-2 border-[#00648c] flex items-stretch shrink-0 text-[12.5px]">
            <div className="w-[96px] flex items-center pl-[6px] text-[#333]">
              <Ico w={16} h={16}><path d="M1 3l10-2 4 2v10l-9 2-5-2z" stroke="#444" /><circle cx="6" cy="9" r="3.5" stroke="#444" /><path d="M11 1v12" stroke="#444" /></Ico>
              <span className="ml-[5px] whitespace-nowrap">發現中心</span>
            </div>
            <div className="w-[127px] bg-[#00648c] flex items-center pl-[7px] text-[#e3eff4]">
              <Ico w={18} h={15}><path d="M1 12L5 3c1-3 4-2 5 1l2 3 5 3-6 4H5z" fill="#9a9a9a" stroke="#ccc" strokeWidth="0.5" /></Ico>
              <span className="ml-[2px] text-[13px]">model1.prt</span>
              <Ico w={10} h={11} className="ml-[7px]"><path d="M.5.5h6l3 3v7h-9z" fill="#fff" /><path d="M3 6h4" stroke="#00648c" /></Ico>
              <X size={11} strokeWidth={3} color="#d5d5d5" className="ml-[6px]" />
            </div>
          </div>
          <div className="flex-1 relative min-h-0 overflow-hidden">
            <Canvas />
            <FloatBar />
          </div>
        </div>
      </div>
      <div className="h-[22px] border-t border-[#aaa] bg-white flex items-center pl-[3px] text-[11px] text-[#222] shrink-0">
        <span className="w-[55px] whitespace-nowrap">選取對稱線</span>
        <span className="ml-[876px] whitespace-nowrap">選定的物件已設為對稱</span>
      </div>
      <div className="h-[8px] bg-[#2f2318] flex shrink-0 overflow-hidden">
        <div className="ml-[33px] mt-[5px] w-[9px] h-[9px] rounded-full bg-[#f0a3b5]" />
        <div className="ml-[1150px] mt-[6px] w-[5px] h-[5px] rounded-full bg-[#b04fa0]" />
        <div className="ml-[11px] mt-[4px] w-[38px] h-[8px] rounded-[2px] bg-[#4a4340]" />
      </div>
      <Dialog />
      <Alert />
      <div className="absolute left-[1707px] top-[1016px] h-[16px] overflow-hidden text-[14px] leading-[16px] text-[#8c8c8c] whitespace-nowrap font-['Liberation_Mono','Noto_Sans_CJK_SC',monospace]">UG爱好者论坛 WWW.UGSNX.COM</div>
    </div>
  );
}
